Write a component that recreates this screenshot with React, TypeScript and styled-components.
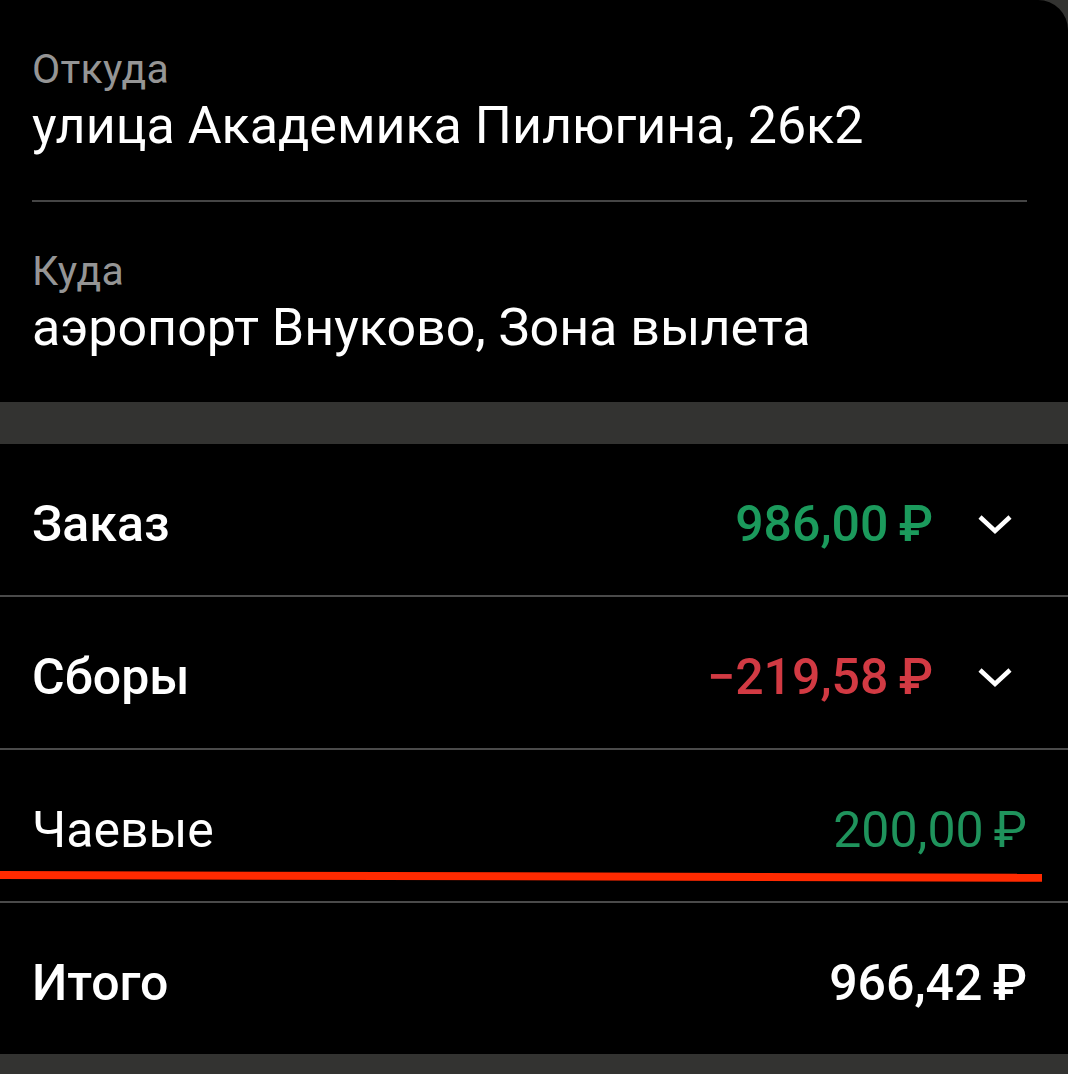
import React from 'react';
import styled, { createGlobalStyle } from 'styled-components';

const GlobalStyle = createGlobalStyle`
  html, body {
    margin: 0;
    padding: 0;
    background: #333331;
  }
  body {
    font-family: Roboto, "Noto Sans", "Liberation Sans", sans-serif;
    -webkit-font-smoothing: antialiased;
  }
`;

const Card = styled.div`
  width: 1068px;
  height: 1074px;
  background: #000;
  border-top-right-radius: 30px;
  overflow: hidden;
  display: flex;
  flex-direction: column;
`;

const AddressList = styled.div`
  padding: 0 41px 0 32px;
`;

const AddressItem = styled.div<{ $last?: boolean }>`
  padding: 45px 0 44px;
  border-bottom: ${(p) => (p.$last ? 'none' : '2px solid #454545')};
`;

const AddressLabel = styled.div`
  font-size: 41px;
  line-height: 48px;
  color: #959595;
  letter-spacing: 0.3px;
`;

const AddressValue = styled.div`
  font-size: 52px;
  line-height: 60px;
  color: #fff;
  margin-top: 3px;
`;

const Band = styled.div`
  height: 42px;
  flex-shrink: 0;
  background: #333331;
`;

const Row = styled.div<{ $divider?: boolean }>`
  position: relative;
  height: 151px;
  flex-shrink: 0;
  box-sizing: content-box;
  display: flex;
  align-items: center;
  padding: 0 41px 0 32px;
  border-bottom: ${(p) => (p.$divider ? '2px solid #4a4a4a' : 'none')};
`;

const RowText = styled.div`
  flex: 1;
  display: flex;
  align-items: center;
  padding-top: 9px;
`;

const RowLabel = styled.div<{ $weight: number }>`
  flex: 1;
  font-size: 50px;
  font-weight: ${(p) => p.$weight};
  color: #fff;
`;

const Amount = styled.div<{ $color: string; $weight: number }>`
  font-size: 50px;
  font-weight: ${(p) => p.$weight};
  color: ${(p) => p.$color};
  white-space: nowrap;
`;

const Chevron = styled.div`
  width: 94px;
  display: flex;
  justify-content: flex-end;
  padding-right: 15px;
  box-sizing: border-box;
`;

const Marker = styled.div`
  position: absolute;
  left: 0;
  width: 1042px;
  bottom: 22px;
  height: 8px;
  background: #ff2a00;
  transform: rotate(0.15deg);
  transform-origin: left center;
`;

const BottomBand = styled.div`
  flex: 1;
  background: #333331;
`;

const ChevronIcon = () => (
  <svg width="34" height="22" viewBox="0 0 34 22">
    <path d="M2 4 L17 18 L32 4" fill="none" stroke="#fff" strokeWidth="4.5" />
  </svg>
);

const GREEN = '#1b9a5c';
const RED = '#d23a43';

const rows = [
  { label: 'Заказ', amount: '986,00\u2009₽', color: GREEN, weight: 500, chevron: true },
  { label: 'Сборы', amount: '\u2212219,58\u2009₽', color: RED, weight: 500, chevron: true },
  { label: 'Чаевые', amount: '200,00\u2009₽', color: '#1f935c', weight: 400, chevron: false, marked: true },
  { label: 'Итого', amount: '966,42\u2009₽', color: '#fff', weight: 500, chevron: false },
];

const App: React.FC = () => {
  return (
    <>
      <GlobalStyle />
      <Card>
        <AddressList>
          <AddressItem>
            <AddressLabel>Откуда</AddressLabel>
            <AddressValue>улица Академика Пилюгина, 26к2</AddressValue>
          </AddressItem>
          <AddressItem $last>
            <AddressLabel>Куда</AddressLabel>
            <AddressValue>аэропорт Внуково, Зона вылета</AddressValue>
          </AddressItem>
        </AddressList>
        <Band />
        {rows.map((r, i) => (
          <Row key={r.label} $divider={i < rows.length - 1}>
            <RowText>
              <RowLabel $weight={r.weight}>{r.label}</RowLabel>
              <Amount $color={r.color} $weight={r.weight}>
                {r.amount}
              </Amount>
              {r.chevron && (
                <Chevron>
                  <ChevronIcon />
                </Chevron>
              )}
            </RowText>
            {r.marked && <Marker />}
          </Row>
        ))}
        <BottomBand />
      </Card>
    </>
  );
};

export default App;
